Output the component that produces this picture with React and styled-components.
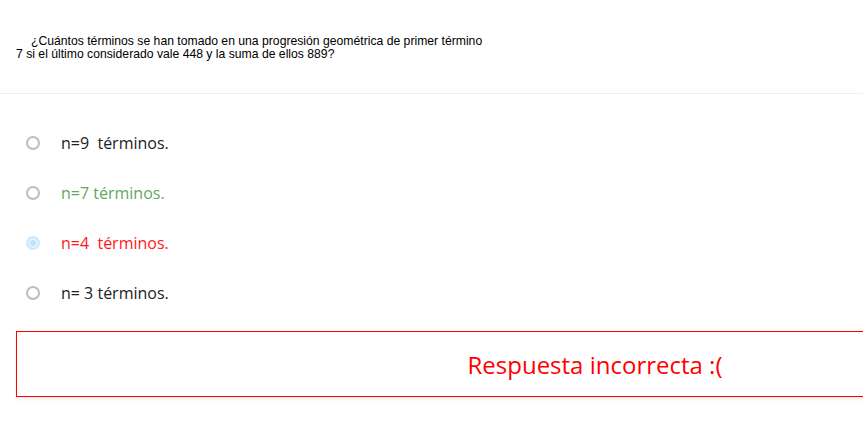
import React from 'react';
import styled, {createGlobalStyle} from 'styled-components';

const GlobalStyle = createGlobalStyle`
	html, body {
		margin: 0;
		padding: 0;
		background: #fff;
		overflow: hidden;
	}
`;

const options = [
	{id: 1, label: 'n=9\u00a0 términos.', tone: 'plain'},
	{id: 2, label: 'n=7 términos.', tone: 'right'},
	{id: 3, label: 'n=4\u00a0 términos.', tone: 'wrong', checked: true},
	{id: 4, label: 'n= 3 términos.', tone: 'plain'},
];

const toneColor = {
	plain: '#222',
	right: '#5fa95c',
	wrong: '#ff1a1a',
};

export default function App() {
	return (
		<Page>
			<GlobalStyle />
			<Question>
				<p>
					¿Cuántos términos se han tomado en una progresión geométrica de
					primer término 7 si el último considerado vale 448 y la suma de
					ellos 889?
				</p>
			</Question>
			<Options>
				{options.map((opt) => (
					<Option key={opt.id}>
						<Radio checked={opt.checked} />
						<Label tone={opt.tone}>{opt.label}</Label>
					</Option>
				))}
			</Options>
			<Feedback>Respuesta incorrecta :(</Feedback>
		</Page>
	);
}

const Page = styled.div`
	width: 100vw;
	overflow: hidden;
	padding-top: 35px;
	padding-bottom: 10px;
`;

const Question = styled.div`
	border-bottom: 1px solid #f0f0f0;
	height: 59px;
	box-sizing: border-box;

	p {
		margin: 0 0 0 16px;
		width: 474px;
		text-indent: 15px;
		font-family: 'Liberation Sans', Arial, sans-serif;
		font-size: 12.2px;
		line-height: 13px;
		color: #000;
	}
`;

const Options = styled.div`
	display: flex;
	flex-direction: column;
	padding: 24px 0 0 26px;
`;

const Option = styled.label`
	display: flex;
	align-items: center;
	height: 50px;
	gap: 21px;
`;

const Radio = styled.span`
	flex: none;
	width: 14px;
	height: 14px;
	box-sizing: border-box;
	border-radius: 50%;
	border: 2px solid ${(p) => (p.checked ? '#cfe9fc' : '#bdbdbd')};
	background: ${(p) => (p.checked ? '#bfe2fb' : '#fff')};
	box-shadow: ${(p) => (p.checked ? 'inset 0 0 0 2px #e4f3fe' : 'none')};
`;

const Label = styled.span`
	font-family: 'Open Sans', sans-serif;
	font-size: 16px;
	color: ${(p) => toneColor[p.tone]};
	white-space: pre;
`;

const Feedback = styled.div`
	margin: 13px 0 0 16px;
	width: 1158px;
	height: 66px;
	box-sizing: border-box;
	border: 1px solid #ff0000;
	box-shadow: 0 2px 3px rgba(0, 0, 0, 0.08);
	display: flex;
	align-items: center;
	justify-content: center;
	font-family: 'Open Sans', sans-serif;
	font-size: 24px;
	color: #ff0000;
`;
